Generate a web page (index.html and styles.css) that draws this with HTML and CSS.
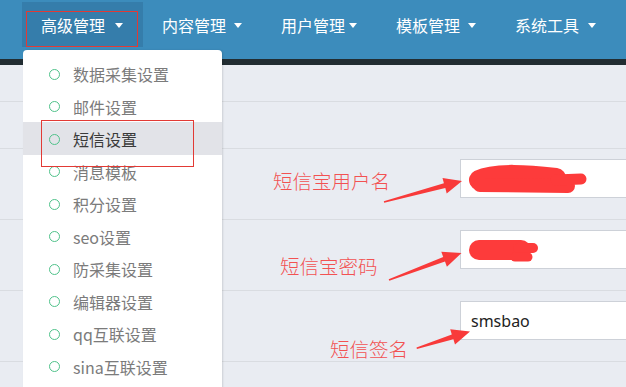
FILE: index.html
```html
<!DOCTYPE html>
<html lang="zh-CN">
<head>
<meta charset="utf-8">
<title>短信设置</title>
<link rel="stylesheet" href="styles.css">
</head>
<body>
<header class="navbar">
  <nav class="nav">
    <div class="nav-item active">
      <span>高级管理</span><span class="caret c10"></span>
      <ul class="dropdown">
        <li class="dd-item"><span class="dot"></span>数据采集设置</li>
        <li class="dd-item"><span class="dot"></span>邮件设置</li>
        <li class="dd-item current"><span class="dot"></span>短信设置</li>
        <li class="dd-item"><span class="dot"></span>消息模板</li>
        <li class="dd-item"><span class="dot"></span>积分设置</li>
        <li class="dd-item"><span class="dot"></span>seo设置</li>
        <li class="dd-item"><span class="dot"></span>防采集设置</li>
        <li class="dd-item"><span class="dot"></span>编辑器设置</li>
        <li class="dd-item"><span class="dot"></span>qq互联设置</li>
        <li class="dd-item"><span class="dot"></span>sina互联设置</li>
      </ul>
    </div>
    <div class="nav-item"><span>内容管理</span><span class="caret c8"></span></div>
    <div class="nav-item"><span>用户管理</span><span class="caret c4"></span></div>
    <div class="nav-item"><span>模板管理</span><span class="caret c8"></span></div>
    <div class="nav-item"><span>系统工具</span><span class="caret c9"></span></div>
  </nav>
</header>
<div class="strip"></div>
<main class="form">
  <div class="row row-head"></div>
  <div class="row row-top"></div>
  <div class="row"><div class="label"></div><div class="field"><div class="input"></div></div></div>
  <div class="row"><div class="label"></div><div class="field"><div class="input"></div></div></div>
  <div class="row"><div class="label"></div><div class="field"><div class="input">smsbao</div></div></div>
  <div class="row row-last"></div>
</main>

<div class="annotations">
  <div class="mark mark-nav"></div>
  <div class="mark mark-item"></div>
  <span class="note note-1">短信宝用户名</span>
  <span class="note note-2">短信宝密码</span>
  <span class="note note-3">短信签名</span>
  <svg class="ink" width="626" height="387" viewBox="0 0 626 387">
    <g fill="#f83a3a">
      <polygon points="384.2,202.8 445.3,188.1 446.7,193.4 462,181 442.5,178 443.9,183.3 383.8,201.2"/>
      <polygon points="389.3,280.7 445,261.6 446.9,266.8 461.5,253 441.3,251.8 443.2,257 388.7,279.3"/>
      <polygon points="416.9,349.1 453.4,339.2 455,344.4 470,331.5 450.2,329.2 451.8,334.4 416.5,347.5"/>
    </g>
    <g fill="none" stroke="#fd3b3b" stroke-linecap="round">
      <path d="M479,180 C495,172 530,175 556,178" stroke-width="20"/>
      <path d="M480,185 L568,186" stroke-width="14"/>
      <path d="M556,180 L581,179" stroke-width="11"/>
      <path d="M479,250 L521,250" stroke-width="20"/>
      <path d="M518,248 L533,248" stroke-width="10"/>
      <path d="M515,257 L528,257" stroke-width="9"/>
    </g>
  </svg>
</div>
</body>
</html>
```
FILE: styles.css
```css
* { box-sizing: border-box; }
html, body {
  margin: 0;
  padding: 0;
}
body {
  width: 626px;
  height: 387px;
  overflow: hidden;
  position: relative;
  background: #e9ecf2;
  font-family: "Noto Sans CJK SC", "Noto Sans", sans-serif;
}

.navbar {
  height: 59px;
  background: #3c8cbc;
}
.nav {
  display: flex;
  align-items: flex-start;
  padding-left: 22px;
}
.nav-item {
  position: relative;
  margin-top: 2px;
  height: 45px;
  display: flex;
  align-items: center;
  padding: 0 20px 0 19px;
  color: #fff;
  font-size: 16px;
  line-height: 1;
}
.nav-item.active { background: #357dab; }
.caret {
  width: 0;
  height: 0;
  border-left: 4px solid transparent;
  border-right: 4px solid transparent;
  border-top: 5px solid #fff;
  margin-top: 1px;
}
.c10 { margin-left: 10px; }
.c8 { margin-left: 8px; }
.c4 { margin-left: 4px; }
.c9 { margin-left: 9px; }

.strip {
  height: 6px;
  background: #222d32;
}

.dropdown {
  position: absolute;
  top: 48px;
  left: 1px;
  width: 199px;
  height: 360px;
  margin: 0;
  padding: 7px 0 0;
  list-style: none;
  background: #fff;
  border-radius: 4px;
  box-shadow: 1px 0 2px rgba(0, 0, 0, 0.12);
  z-index: 5;
}
.dd-item {
  height: 32.5px;
  display: flex;
  align-items: center;
  padding: 2px 0 0 26px;
  color: #7b7b7b;
  font-size: 16px;
  line-height: 1;
}
.dd-item.current {
  background: #e2e3e8;
  color: #3a3a3a;
}
.dot {
  width: 11px;
  height: 11px;
  border: 1.8px solid #4fc28a;
  border-radius: 50%;
  margin-right: 13px;
  flex: none;
}

.form { display: block; }
.row {
  display: grid;
  grid-template-columns: 460px 166px;
  height: 71px;
  padding-top: 10px;
  border-bottom: 1px solid #d9dce1;
}
.row-head { height: 37px; padding-top: 0; }
.row-top { height: 47px; padding-top: 0; }
.row-last { height: 25px; border-bottom: none; }
.input {
  height: 39px;
  background: #fff;
  border: 1px solid #cdd1d8;
  border-right: none;
  padding: 0 10px;
  display: flex;
  align-items: center;
  font-family: "Noto Sans", sans-serif;
  font-size: 16px;
  color: #222;
}

.annotations {
  position: absolute;
  inset: 0;
  pointer-events: none;
  z-index: 10;
}
.ink { position: absolute; left: 0; top: 0; }
.mark {
  position: absolute;
  border: 1px solid #e23a35;
}
.mark-nav { left: 26px; top: 11px; width: 112px; height: 36px; }
.mark-item { left: 41px; top: 120px; width: 153px; height: 47px; }
.note {
  position: absolute;
  font-size: 19.5px;
  line-height: 20px;
  font-weight: 300;
  color: #f25252;
  white-space: nowrap;
}
.note-1 { left: 273px; top: 171px; }
.note-2 { left: 280px; top: 256px; }
.note-3 { left: 330px; top: 339px; }
```
